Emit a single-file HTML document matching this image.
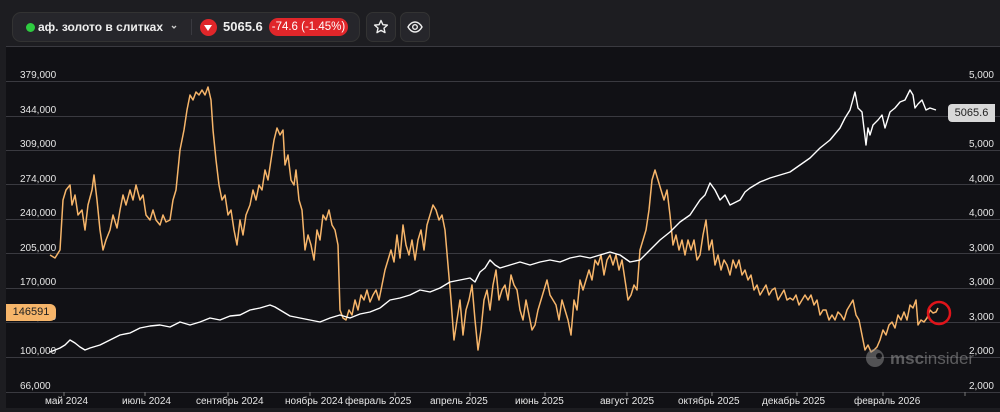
<!DOCTYPE html><html><head><meta charset="utf-8"><style>
body{margin:0;width:1000px;height:412px;background:#1d1d21;font-family:"Liberation Sans",sans-serif;overflow:hidden;position:relative;color:#ddd}
.panel{position:absolute;left:6px;top:46px;width:994px;height:362px;background:#111115}
.pill{position:absolute;left:12px;top:12px;width:346px;height:28px;background:#26262b;border-radius:9px;border:1px solid #333}
.btn{position:absolute;top:12px;width:28px;height:28px;background:#26262b;border-radius:7px;border:1px solid #333}
.t{position:absolute;font-size:10px;color:#e6e6e6;white-space:nowrap}
.l{left:20px}.r{right:6px;text-align:right}
</style></head><body>
<div class="pill">
<div style="position:absolute;left:13px;top:10px;width:9px;height:9px;border-radius:50%;background:#2ecc40"></div>
<div style="position:absolute;left:25px;top:7px;font-size:12px;font-weight:bold;color:#eee">аф. золото в слитках</div>
<svg style="position:absolute;left:157px;top:10px" width="8" height="8" viewBox="0 0 8 8"><path d="M2 3l2 2 2-2" fill="none" stroke="#ccc" stroke-width="1.3"/></svg>
<div style="position:absolute;left:178px;top:6px;width:1px;height:16px;background:#3a3a40"></div>
<div style="position:absolute;left:187px;top:6px;width:17px;height:17px;border-radius:50%;background:#e0262a"><div style="position:absolute;left:4px;top:6px;border-left:4.5px solid transparent;border-right:4.5px solid transparent;border-top:6px solid #fff"></div></div>
<div style="position:absolute;left:210px;top:6px;font-size:13px;font-weight:bold;color:#eee">5065.6</div>
<div style="position:absolute;left:256px;top:5px;width:79px;height:18px;border-radius:9px;background:#e0262a;color:#fff;font-size:11.5px;line-height:18px;text-align:center">-74.6 (-1.45%)</div>
</div>
<div class="btn" style="left:366px"><svg width="28" height="28" viewBox="0 0 28 28"><path d="M14 7.5l1.9 4.2 4.5.4-3.4 3 1 4.5L14 17.3l-4 2.3 1-4.5-3.4-3 4.5-.4z" fill="none" stroke="#eee" stroke-width="1.4" stroke-linejoin="round"/></svg></div>
<div class="btn" style="left:400px"><svg width="28" height="28" viewBox="0 0 28 28"><path d="M7 14c2-3.5 4.5-5 7-5s5 1.5 7 5c-2 3.5-4.5 5-7 5s-5-1.5-7-5z" fill="none" stroke="#eee" stroke-width="1.4"/><circle cx="14" cy="14" r="2.3" fill="none" stroke="#eee" stroke-width="1.4"/></svg></div>
<div class="panel"></div>
<svg style="position:absolute;left:0;top:0" width="1000" height="412">
<g stroke="#3a3a40" stroke-width="1">
<line x1="6" x2="1000" y1="46.5" y2="46.5"/><line x1="6" x2="1000" y1="81.5" y2="81.5"/><line x1="6" x2="1000" y1="116.5" y2="116.5"/><line x1="6" x2="1000" y1="150.5" y2="150.5"/><line x1="6" x2="1000" y1="184.5" y2="184.5"/><line x1="6" x2="1000" y1="219.5" y2="219.5"/><line x1="6" x2="1000" y1="253.5" y2="253.5"/><line x1="6" x2="1000" y1="288.5" y2="288.5"/><line x1="6" x2="1000" y1="322.5" y2="322.5"/><line x1="6" x2="1000" y1="357.5" y2="357.5"/><line x1="6" x2="1000" y1="392.5" y2="392.5"/>
</g>
<g stroke="#777" stroke-width="1"><line x1="64" x2="64" y1="392" y2="396"/><line x1="145" x2="145" y1="392" y2="396"/><line x1="228" x2="228" y1="392" y2="396"/><line x1="310" x2="310" y1="392" y2="396"/><line x1="395" x2="395" y1="392" y2="396"/><line x1="470" x2="470" y1="392" y2="396"/><line x1="545" x2="545" y1="392" y2="396"/><line x1="627" x2="627" y1="392" y2="396"/><line x1="712" x2="712" y1="392" y2="396"/><line x1="797" x2="797" y1="392" y2="396"/><line x1="883" x2="883" y1="392" y2="396"/><line x1="965" x2="965" y1="392" y2="396"/></g>
<polyline fill="none" stroke="#f6b56a" stroke-width="1.5" stroke-linejoin="round" points="50,255 55,258 60,250 63,200 66,190 70,185 72,205 75,195 78,215 82,210 85,230 88,205 92,190 94,175 97,200 100,230 103,250 106,240 110,230 113,215 117,228 120,210 123,195 126,205 130,190 133,200 136,185 140,200 143,195 146,215 150,220 153,210 156,220 160,225 163,215 166,222 170,220 173,200 176,190 180,150 184,130 187,110 190,95 193,100 196,92 199,95 202,90 205,95 208,87 211,100 213,130 216,160 219,185 222,200 225,195 228,215 231,210 234,230 237,245 240,220 243,235 246,215 250,205 253,190 256,200 259,185 262,190 265,170 268,180 271,160 274,140 277,128 280,135 283,130 285,165 288,155 291,180 294,185 296,170 299,200 302,210 305,250 308,235 311,245 314,260 317,230 320,240 323,215 326,220 329,210 332,225 335,230 338,245 340,310 343,318 346,320 349,310 352,315 355,300 358,310 361,295 364,300 367,290 370,302 373,295 376,290 379,300 382,285 385,270 388,260 391,250 394,262 397,235 400,258 403,225 406,245 409,255 412,240 415,260 418,240 421,230 424,250 427,225 430,215 433,205 436,210 439,220 442,215 445,230 448,265 451,300 454,340 457,320 460,300 463,335 466,310 469,300 472,285 475,320 478,350 481,330 484,300 487,290 490,310 493,285 496,270 499,300 502,290 505,285 508,300 511,275 514,285 517,290 520,310 523,320 526,300 529,315 532,330 535,325 538,310 541,300 544,290 547,280 550,295 553,300 556,305 559,320 562,300 565,310 568,320 571,335 574,300 577,310 580,280 583,290 586,280 589,270 592,280 595,260 598,265 601,255 604,275 607,260 610,255 613,265 616,255 619,270 622,260 625,280 628,300 631,295 634,285 637,290 640,250 643,240 646,230 649,210 652,180 655,170 658,180 661,190 664,200 667,190 670,215 673,245 676,235 679,250 682,240 685,255 688,240 691,250 694,240 697,260 700,255 703,235 706,220 709,250 712,240 715,265 718,255 721,270 724,260 727,265 730,275 733,260 736,268 739,260 742,275 745,270 748,280 751,275 754,290 757,285 760,295 763,290 766,285 769,295 772,290 775,288 778,300 781,295 784,290 787,300 790,298 793,300 796,295 799,305 802,300 805,295 808,300 811,295 814,305 817,300 820,315 823,310 826,310 829,320 832,315 835,320 838,312 841,315 844,320 847,310 850,305 853,300 856,315 859,320 862,335 865,350 868,345 871,352 874,350 877,347 880,340 883,330 886,335 889,325 892,322 895,328 898,315 901,320 904,312 907,320 910,305 913,308 916,300 918,325 921,320 924,322 927,318 930,310 933,313 936,312 938,308"/>
<polyline fill="none" stroke="#fff" stroke-width="1.4" stroke-linejoin="round" points="50,352 60,348 65,345 70,340 75,343 80,347 85,350 90,348 100,345 110,340 120,335 130,333 140,328 150,326 160,325 170,327 180,322 190,325 200,322 210,318 220,320 230,316 240,315 250,310 260,308 270,305 275,307 280,310 290,316 300,318 310,320 320,322 330,318 340,315 350,318 360,314 370,312 380,308 390,300 400,298 410,295 420,290 430,292 440,288 450,282 460,280 470,278 475,282 480,272 485,268 490,260 495,265 500,268 510,265 520,262 530,265 540,262 550,260 560,262 570,258 580,256 590,258 600,255 610,252 620,255 630,262 640,260 650,250 660,240 670,232 680,222 690,215 700,200 705,195 710,183 715,190 720,200 725,195 730,205 740,200 745,192 750,188 760,182 770,178 780,175 790,172 800,165 810,158 820,148 830,140 840,128 845,118 850,110 855,92 858,108 862,112 866,145 868,128 870,135 873,125 878,120 882,115 885,128 890,112 895,108 900,102 905,100 910,90 913,95 915,108 918,104 922,100 926,110 930,108 936,110"/>
<circle cx="939" cy="313" r="11" fill="none" stroke="#e0141a" stroke-width="2.5"/>
<g opacity="0.55"><circle cx="875" cy="358" r="9" fill="#888"/><circle cx="879" cy="356" r="3" fill="#111115"/><text x="890" y="364" font-family="Liberation Sans" font-size="17" fill="#999" font-weight="bold">msc</text><text x="924" y="364" font-family="Liberation Sans" font-size="17" fill="#999">insider</text></g>
</svg>
<div class="t l" style="top:70px">379,000</div><div class="t l" style="top:105px">344,000</div><div class="t l" style="top:139px">309,000</div><div class="t l" style="top:174px">274,000</div><div class="t l" style="top:208px">240,000</div><div class="t l" style="top:243px">205,000</div><div class="t l" style="top:277px">170,000</div><div class="t l" style="top:312px">135,000</div><div class="t l" style="top:346px">100,000</div><div class="t l" style="top:381px">66,000</div>
<div class="t r" style="top:70px">5,000</div><div class="t r" style="top:139px">5,000</div><div class="t r" style="top:174px">4,000</div><div class="t r" style="top:208px">4,000</div><div class="t r" style="top:243px">3,000</div><div class="t r" style="top:277px">3,000</div><div class="t r" style="top:312px">3,000</div><div class="t r" style="top:346px">2,000</div><div class="t r" style="top:381px">2,000</div>
<div style="position:absolute;left:948px;top:104px;width:47px;height:18px;background:#d8d8d8;border-radius:4px 0 0 4px;color:#222;font-size:11px;line-height:18px;text-align:center">5065.6</div>
<div style="position:absolute;left:6px;top:304px;width:50px;height:17px;background:#f6b56a;border-radius:0 6px 6px 0;color:#222;font-size:11px;line-height:17px;text-align:center">146591</div>
<div class="t" style="top:396px;left:45px">май 2024</div><div class="t" style="top:396px;left:122px">июль 2024</div><div class="t" style="top:396px;left:196px">сентябрь 2024</div><div class="t" style="top:396px;left:285px">ноябрь 2024</div><div class="t" style="top:396px;left:345px">февраль 2025</div><div class="t" style="top:396px;left:430px">апрель 2025</div><div class="t" style="top:396px;left:515px">июнь 2025</div><div class="t" style="top:396px;left:600px">август 2025</div><div class="t" style="top:396px;left:678px">октябрь 2025</div><div class="t" style="top:396px;left:762px">декабрь 2025</div><div class="t" style="top:396px;left:854px">февраль 2026</div>
</body></html>
